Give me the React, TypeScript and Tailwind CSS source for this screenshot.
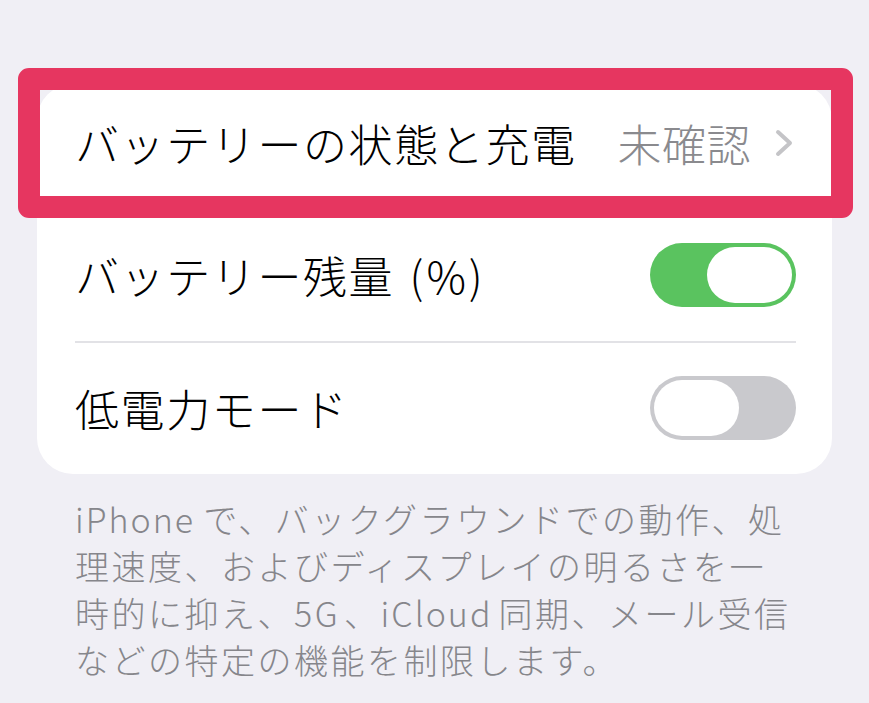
import React from 'react';

const jp = "font-['Noto_Sans_CJK_JP','Noto_Sans',sans-serif]";

function Toggle({ on }: { on: boolean }) {
  return (
    <div
      className={`flex h-[64px] w-[146px] shrink-0 items-center rounded-full p-[4px] ${
        on ? 'justify-end bg-[#5ac35f]' : 'justify-start bg-[#c9c9cd]'
      }`}
    >
      <div className="h-[56px] w-[85px] rounded-full bg-white" />
    </div>
  );
}

function Chevron() {
  return (
    <svg width="18" height="28" viewBox="0 0 18 28" fill="none" className="shrink-0">
      <path d="M3 3 L15 14 L3 25" stroke="#c4c4c7" strokeWidth="4" strokeLinecap="round" strokeLinejoin="round" />
    </svg>
  );
}

export default function App() {
  return (
    <div className={`min-h-screen w-full overflow-hidden bg-[#f0eff5] font-light ${jp}`}>
      <div className="px-[37px] pt-[84px]">
        {/* Settings group */}
        <div className="relative rounded-[36px] bg-white">
          <div className="flex h-[127px] items-center justify-between pb-[10px] pl-[38px] pr-[39px]">
            <span className="text-[44px] leading-none tracking-[1.6px] text-black">バッテリーの状態と充電</span>
            <div className="flex items-center gap-[24px]">
              <span className="text-[44px] leading-none tracking-[0.5px] text-[#8a8a8e]">未確認</span>
              <Chevron />
            </div>
          </div>

          <div className="flex h-[130px] items-center justify-between pb-[2px] pl-[38px] pr-[36px]">
            <span className="text-[44px] leading-none tracking-[1.6px] text-black">
              バッテリー残量 <span className="ml-[4px] tracking-[3px]">(%)</span>
            </span>
            <Toggle on />
          </div>

          <div className="ml-[38px] mr-[36px] h-[1.5px] bg-[#e2e2e6]" />

          <div className="flex h-[131px] items-center justify-between pl-[38px] pr-[36px]">
            <span className="text-[44px] leading-none tracking-[1.6px] text-black">低電力モード</span>
            <Toggle on={false} />
          </div>

          {/* highlight annotation */}
          <div className="pointer-events-none absolute left-[-19px] top-[-16px] h-[150px] w-[835px] rounded-[11px] border-[22px] border-[#e63660]" />
        </div>

        {/* Footer */}
        <div className="pl-[38px] pt-[21px] text-[34px] leading-[47px] tracking-[2.5px] text-[#86868b]">
          <div className="whitespace-nowrap">
            <span className="mr-[8px] tracking-[2px]">iPhone</span>で、バックグラウンドでの動作、処
          </div>
          <div className="whitespace-nowrap">理速度、およびディスプレイの明るさを一</div>
          <div className="whitespace-nowrap">
            時的に抑え、<span className="mr-[4px]">5G</span>、<span className="mr-[6px] tracking-[2px]">iCloud</span>同期、メール受信
          </div>
          <div className="whitespace-nowrap">などの特定の機能を制限します。</div>
        </div>
      </div>
    </div>
  );
}
